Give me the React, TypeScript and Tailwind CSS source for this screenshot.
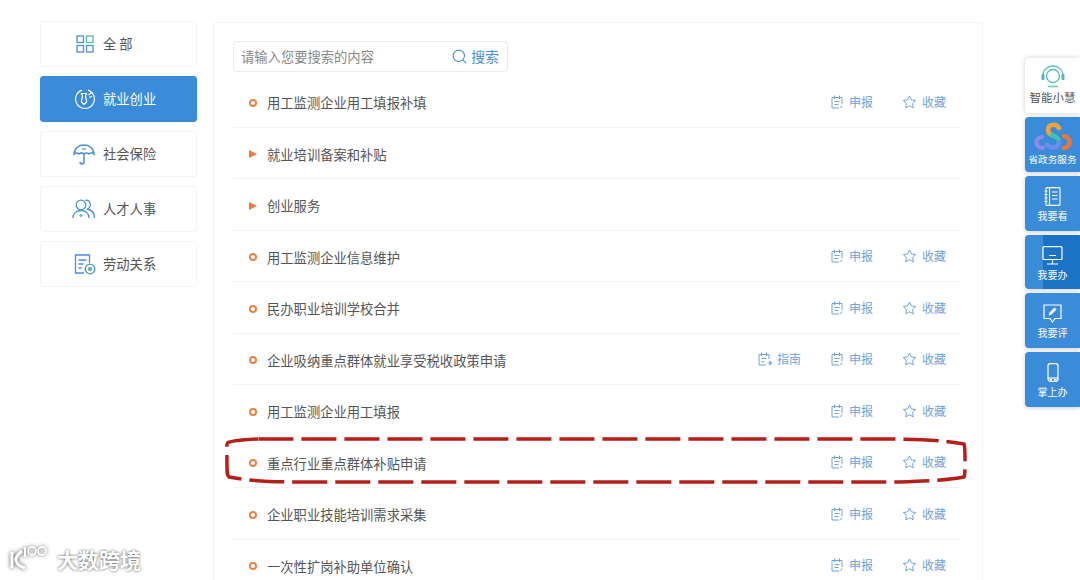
import { ReactNode } from 'react';
import { Search } from 'lucide-react';

const font = { fontFamily: '"Noto Sans CJK SC", "Noto Sans", sans-serif' };

const ReportIcon = () => (
  <svg width="14" height="14" viewBox="0 0 14 14" fill="none" stroke="#6fa3dc" strokeWidth="1">
    <path d="M12 9V2.500H2v10.500h7" />
    <path d="M4.500 0.500v3.500M9.500 0.500v3.500M4.500 6.500h5M4.500 9.500h4" />
    <path d="M12 10.500l-1.500 2.500" />
  </svg>
);

const GuideIcon = () => (
  <svg width="14" height="14" viewBox="0 0 14 14" fill="none" stroke="#6fa3dc" strokeWidth="1">
    <path d="M11 7V2.500H1v10.500h7" />
    <path d="M3.500 0.500v3.500M8.500 0.500v3.500M3.500 6.500h5M3.500 9.500h3" />
    <path d="M9.500 11h4M11.500 9l2 2-2 2" strokeWidth="1.200" />
  </svg>
);

const StarIcon = () => (
  <svg width="15" height="14" viewBox="0 0 15 14" fill="none" stroke="#6fa3dc" strokeWidth="1" strokeLinejoin="round">
    <path d="M7.500 1l1.900 3.900 4.300.6-3.100 3 .7 4.300-3.800-2-3.800 2 .7-4.300-3.100-3 4.300-.6z" />
  </svg>
);

function Action({ icon, label, className }: { icon: ReactNode; label: string; className: string }) {
  return (
    <span className={`mt-[1px] flex items-center gap-[5px] text-[12px] text-[#6fa3dc] ${className}`}>
      {icon}
      {label}
    </span>
  );
}

type Row = { title: string; kind: 'item' | 'folder'; guide?: boolean };

const rows: Row[] = [
  { title: '用工监测企业用工填报补填', kind: 'item' },
  { title: '就业培训备案和补贴', kind: 'folder' },
  { title: '创业服务', kind: 'folder' },
  { title: '用工监测企业信息维护', kind: 'item' },
  { title: '民办职业培训学校合并', kind: 'item' },
  { title: '企业吸纳重点群体就业享受税收政策申请', kind: 'item', guide: true },
  { title: '用工监测企业用工填报', kind: 'item' },
  { title: '重点行业重点群体补贴申请', kind: 'item' },
  { title: '企业职业技能培训需求采集', kind: 'item' },
  { title: '一次性扩岗补助单位确认', kind: 'item' },
];

const navItems: { label: string; icon: ReactNode; active?: boolean }[] = [
  {
    label: '全 部',
    icon: (
      <svg width="20" height="20" viewBox="0 0 20 20" fill="none" strokeWidth="1.400">
        <rect x="1" y="2" width="6.500" height="6.500" stroke="#5b96d6" />
        <rect x="10.500" y="2" width="6.500" height="6.500" stroke="#62c0a0" />
        <rect x="1" y="11.500" width="6.500" height="6.500" stroke="#5b96d6" />
        <rect x="10.500" y="11.500" width="6.500" height="6.500" stroke="#5b96d6" />
      </svg>
    ),
  },
  {
    label: '就业创业',
    active: true,
    icon: (
      <svg width="22" height="22" viewBox="0 0 22 22" fill="none" stroke="#fff" strokeWidth="1.200">
        <path d="M14 2.100a9.400 9.400 0 1 1-6 0" />
        <path d="M7.500 5.500h5l-1 2.500 1.200 6L10 16.500 7.300 14l1.200-6z" />
        <path d="M14.500 7l3-2.500M15 9.500l3-1.200" />
      </svg>
    ),
  },
  {
    label: '社会保险',
    icon: (
      <svg width="24" height="24" viewBox="0 0 24 24" fill="none" stroke="#4a90d9" strokeWidth="1.500">
        <path d="M2 12C2.500 6 7 3 12 3s9.500 3 10 9c-1.500-1.500-3.500-1.500-5 0-1.500-1.500-3.500-1.500-5 0-1.500-1.500-3.500-1.500-5 0-1.500-1.500-3.500-1.500-5 0z" />
        <path d="M12 12v8c0 2.500-4 2.500-4 0" />
        <path d="M10 7h4" stroke="#62c0a0" />
      </svg>
    ),
  },
  {
    label: '人才人事',
    icon: (
      <svg width="24" height="22" viewBox="0 0 24 22" fill="none" stroke="#4a90d9" strokeWidth="1.300">
        <circle cx="9" cy="7" r="4.800" />
        <path d="M1 20c0-5 3.500-7.500 8-7.500s8 2.500 8 7.500" />
        <path d="M13 2.300c5-1.200 7.500 5.500 2.500 8.700 4 1 7 4 7 9" />
        <path d="M9 15.500l1.800 2-1.800 2-1.800-2z" fill="#62c0a0" stroke="none" />
      </svg>
    ),
  },
  {
    label: '劳动关系',
    icon: (
      <svg width="22" height="22" viewBox="0 0 22 22" fill="none" stroke="#4a90d9" strokeWidth="1.300">
        <path d="M10 20H1.500V2h14v8" />
        <path d="M4.500 7h8M4.500 11h5M4.500 15h3" />
        <circle cx="16" cy="16" r="4.800" />
        <circle cx="16" cy="16" r="2.200" fill="#62c0a0" stroke="none" />
      </svg>
    ),
  },
];

const floatItems: { label: string; icon: ReactNode; darker?: boolean; first?: boolean }[] = [
  {
    label: '省政务服务',
    first: true,
    icon: (
      <svg width="40" height="29" viewBox="0 0 40 29" fill="none" strokeWidth="4.500" strokeLinecap="round">
        <path d="M10 26C2 26 1 16 9 15" stroke="#8b8ae8" />
        <path d="M26 6c-3-5-11-4-11 2 0 2 1 4 4 5" stroke="#f2a23a" />
        <path d="M19 13c4 2 7 3 7 7" stroke="#3fc6a8" />
        <path d="M26 20c0 6-8 7-12 3" stroke="#6a8df0" />
        <path d="M31 14c7 1 8 11 0 12" stroke="#f0743e" />
      </svg>
    ),
  },
  {
    label: '我要看',
    icon: (
      <svg width="17" height="19" viewBox="0 0 17 19" fill="none" stroke="#fff" strokeWidth="1.100">
        <rect x="2" y="0.600" width="14" height="17.800" rx="1" />
        <path d="M5.500 0.600v17.800M8 5h5.500M8 8.500h5.500M8 12h5.500M0.500 4h3M0.500 7.500h3M0.500 11h3M0.500 14.500h3" />
      </svg>
    ),
  },
  {
    label: '我要办',
    darker: true,
    icon: (
      <svg width="21" height="19" viewBox="0 0 21 19" fill="none" stroke="#fff" strokeWidth="1.200">
        <rect x="1" y="0.700" width="19" height="12.800" rx="1" />
        <path d="M7 9.500h7M10.500 13.500v4M5 18h11" />
      </svg>
    ),
  },
  {
    label: '我要评',
    icon: (
      <svg width="19" height="19" viewBox="0 0 19 19" fill="none" stroke="#fff" strokeWidth="1.200">
        <path d="M1 1h17v13.500h-6L9.500 18 7 14.500H1z" />
        <path d="M5.500 11.500l1-3L11.500 3.500l2 2-5 5z" fill="#fff" stroke="none" />
      </svg>
    ),
  },
  {
    label: '掌上办',
    icon: (
      <svg width="12" height="19" viewBox="0 0 12 19" fill="none" stroke="#fff" strokeWidth="1.200">
        <rect x="1" y="0.700" width="10" height="17.600" rx="2.200" />
        <path d="M1 15h10" />
        <path d="M2.500 16.700h2.500M7 16.700h2.500" strokeWidth="1.600" />
      </svg>
    ),
  },
];

function Sidebar() {
  return (
    <aside className="flex w-[157px] shrink-0 flex-col gap-[9px]">
      {navItems.map((item) => (
        <div
          key={item.label}
          className={`flex h-[46px] items-center rounded-[3px] border text-[13.300px] ${
            item.active ? 'border-[#3a8bd8] bg-[#3a8bd8] text-white' : 'border-[#f3f4f6] bg-white text-[#555]'
          }`}
        >
          <span className="flex w-[62px] shrink-0 justify-end pr-[7px]">{item.icon}</span>
          <span>{item.label}</span>
        </div>
      ))}
    </aside>
  );
}

function ListRow({ row }: { row: Row }) {
  return (
    <div className="flex h-[51.500px] shrink-0 items-center border-b border-[#f3f3f3] pr-[15px]">
      <span className="mt-[3px] flex w-[34px] shrink-0 justify-start pl-[16px]">
        {row.kind === 'item' ? (
          <span className="h-[8px] w-[8px] rounded-full border-2 border-[#e8834a]" />
        ) : (
          <span className="h-0 w-0 border-y-[4.500px] border-l-[8px] border-y-transparent border-l-[#ee7a3a]" />
        )}
      </span>
      <span className="mt-[4px] flex-1 text-[13.300px] text-[#555]">{row.title}</span>
      {row.guide && <Action icon={<GuideIcon />} label="指南" className="mr-[29px]" />}
      {row.kind === 'item' && (
        <>
          <Action icon={<ReportIcon />} label="申报" className="mr-[29px]" />
          <Action icon={<StarIcon />} label="收藏" className="" />
        </>
      )}
    </div>
  );
}

function FloatBar() {
  return (
    <div className="absolute right-0 top-[58px] flex w-[55px] flex-col gap-[4px]">
      <div className="flex h-[55px] flex-col items-center rounded-l-[4px] bg-white pt-[7px] shadow-[0_0_5px_rgba(0,0,0,0.2)]">
        <svg width="26" height="24" viewBox="0 0 26 24" fill="none" stroke="#57b4c4" strokeWidth="1.300">
          <path d="M3 13V10a10 9 0 0 1 20 0v3" />
          <circle cx="13" cy="11" r="6.500" />
          <rect x="1.500" y="9" width="3" height="6" rx="1" fill="#57b4c4" stroke="none" />
          <rect x="21.500" y="9" width="3" height="6" rx="1" fill="#57b4c4" stroke="none" />
          <path d="M8 21.500h10" strokeWidth="1.600" stroke="#6fd0b0" />
        </svg>
        <span className="mt-[1px] text-[11.500px] leading-[14px] text-[#555]">智能小慧</span>
      </div>
      {floatItems.map((item) => (
        <div
          key={item.label}
          className={`flex h-[54.800px] flex-col items-center rounded-l-[4px] text-white shadow-[0_1px_4px_rgba(0,0,0,0.2)] ${
            item.first ? 'pt-[5px]' : 'pt-[11px]'
          } ${item.darker ? 'bg-gradient-to-r from-[#3a8bd8] from-[33%] to-[#1a73c4] to-[33%]' : 'bg-[#3a8bd8]'}`}
        >
          <span className="flex items-end">{item.icon}</span>
          <span className={item.first ? 'mt-[2px] text-[9.600px] leading-[13px]' : 'mt-[3px] text-[10px] leading-[13px]'}>
            {item.label}
          </span>
        </div>
      ))}
    </div>
  );
}

export default function App() {
  return (
    <div className="relative h-[580px] w-[1080px] overflow-hidden bg-white" style={font}>
      <div className="flex items-start gap-[16px] pl-[40px] pt-[21px]">
        <Sidebar />
        <main className="mt-[1px] h-[600px] w-[770px] rounded-t-[4px] border border-[#f3f4f6] pl-[19px] pr-[21px] pt-[18px]">
          <div className="mb-[4px] flex h-[31px] w-[275px] items-center justify-between rounded-[4px] border border-[#e8eaee] pl-[7px] pr-[8px]">
            <span className="text-[13.300px] text-[#888]">请输入您要搜索的内容</span>
            <span className="flex items-center gap-[3px] text-[14px] text-[#4a90d9]">
              <Search size={17} strokeWidth={1.600} />
              搜索
            </span>
          </div>
          <div className="flex flex-col">
            {rows.map((row) => (
              <ListRow key={row.title} row={row} />
            ))}
          </div>
        </main>
      </div>

      <FloatBar />

      {/* hand-drawn highlight over the 8th row */}
      <svg className="absolute left-[222px] top-[434px]" width="748" height="52" viewBox="0 0 748 52" fill="none">
        <path
          d="M36 5C18 6 8 7 5.500 9c-1 1-.5 6-.5 24 0 6 0 8 2 10 15 3 35 5 70 5h600c30-1 50-2 65-5 1-2 1-5 1-18 0-9 0-13-1-15-20-4-50-5-80-5H36z"
          stroke="#b3201a"
          strokeWidth="3.500"
          strokeDasharray="35 8"
          strokeLinecap="butt"
        />
      </svg>

      {/* watermark */}
      <div className="absolute left-[9px] top-[544px] flex items-start gap-[8px] text-white [text-shadow:0_0_3px_rgba(0,0,0,0.7)]">
        <svg width="40" height="26" viewBox="0 0 40 26" fill="none" stroke="#fff" strokeWidth="2" className="drop-shadow-[0_0_2px_rgba(0,0,0,0.7)]">
          <path d="M3 8v16" strokeWidth="3" />
          <path d="M13 7c-5 4-7 7-6 10s5 6 9 7" strokeWidth="3" />
          <path d="M16 3v10" />
          <circle cx="23" cy="7" r="4" strokeWidth="1.500" />
          <circle cx="33" cy="7" r="4" strokeWidth="1.500" />
        </svg>
        <span className="mt-[5px] text-[21px] font-bold leading-none">大数跨境</span>
      </div>
    </div>
  );
}
